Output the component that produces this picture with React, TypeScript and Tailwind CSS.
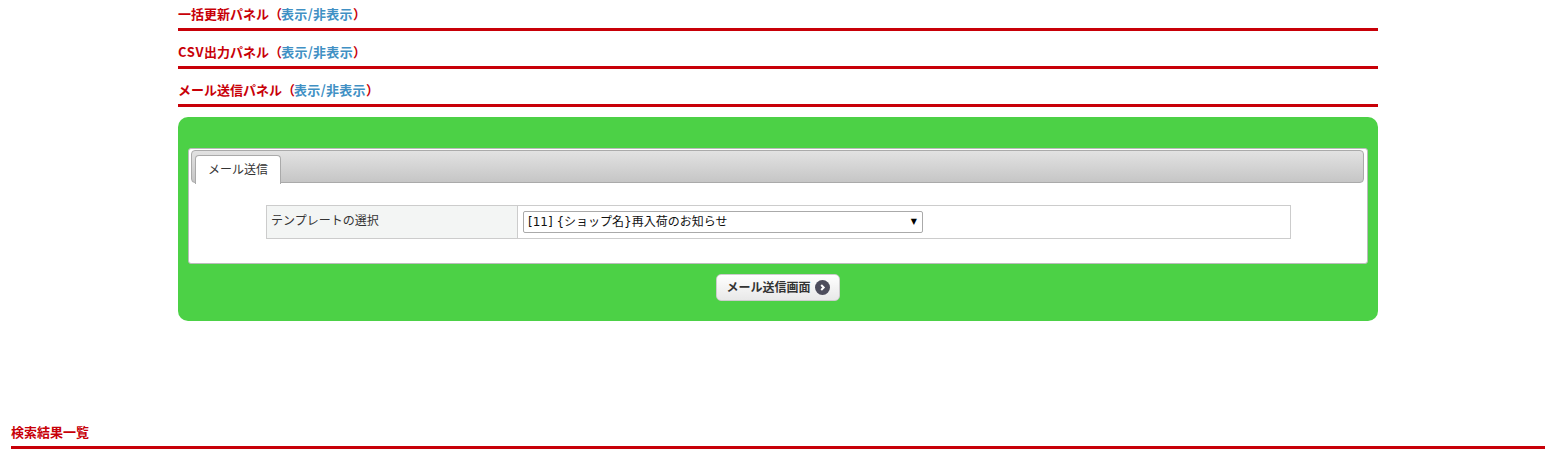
import React from "react";

const body = "font-['DejaVu_Sans','Noto_Sans_CJK_JP',sans-serif]";
const jp = "font-['Noto_Sans_CJK_JP','Noto_Sans',sans-serif]";

type HeadingProps = {
  title: React.ReactNode;
  toggle?: boolean;
  className?: string;
};

function Heading({ title, toggle, className }: HeadingProps) {
  return (
    <h2
      className={`border-b-[3px] border-[#c80008] pb-[4px] text-[13px] leading-[20px] font-bold text-[#c80008] ${jp} ${className}`}
    >
      {title}
      {toggle && (
        <span>
          （<a className="-ml-px tracking-[0.3px] text-[#4090c4]">表示/非表示</a>）
        </span>
      )}
    </h2>
  );
}

function MailPanel() {
  return (
    <div className="mt-[10px] h-[204px] rounded-[10px] bg-[#4cd146] px-[10px] pt-[31px]">
      <div className="h-[116px] rounded-[3px] border border-[#bbbbbb] bg-white p-px">
        <div className="ml-px mr-[2px] flex h-[33px] items-end rounded-[4px] border border-[#aaaaaa] bg-gradient-to-b from-[#e2e2e2] to-[#c6c6c6] pl-[3px]">
          <div className="relative -mb-[2px] flex h-[29px] w-[86px] items-center justify-center rounded-t-[4px] border border-b-0 border-[#aaaaaa] bg-white pb-px text-[12px] text-[#333333]">
            メール送信
          </div>
        </div>
        <div className="ml-[76px] mt-[22px] flex h-[34px] w-[1025px] border border-[#cccccc] text-[12px] text-[#333333]">
          <div className="flex w-[251px] items-center border-r border-[#cccccc] bg-[#f3f5f4] pb-[2px] pl-[4px]">
            テンプレートの選択
          </div>
          <div className="flex items-center pl-[5px]">
            <div className="relative">
              <select className="block h-[22px] w-[400px] appearance-none rounded-[2px] border border-[#aaaaaa] bg-white pl-[4px] text-[12px] text-[#111111] outline-none">
                <option>[11] {"{ショップ名}"}再入荷のお知らせ</option>
              </select>
              <span className="pointer-events-none absolute right-[6px] top-[3px] text-[8px] leading-[16px] text-black">
                ▼
              </span>
            </div>
          </div>
        </div>
      </div>
      <div className="mt-[10px] flex justify-center">
        <button className="flex h-[27px] w-[124px] items-center justify-center gap-[4px] rounded-[5px] border border-[#cccccc] bg-gradient-to-b from-white to-[#e8e8e8] text-[12px] font-bold text-[#333333]">
          メール送信画面
          <svg width="15" height="15" viewBox="0 0 15 15">
            <circle cx="7.5" cy="7.5" r="7.5" fill="#4d4d5c" />
            <path d="M6.2 5 L8.7 7.5 L6.2 10" fill="none" stroke="#ffffff" strokeWidth="2" />
          </svg>
        </button>
      </div>
    </div>
  );
}

export default function App() {
  return (
    <div className={`h-[463px] w-[1555px] overflow-hidden bg-white ${body}`}>
      <div className="ml-[178px] w-[1200px]">
        <Heading title="一括更新パネル" toggle className="pt-[4px]" />
        <Heading
          title={
            <>
              <span className="tracking-[0.6px]">CSV</span>出力パネル
            </>
          }
          toggle
          className="pt-[11px]"
        />
        <Heading title="メール送信パネル" toggle className="pt-[11px]" />
        <MailPanel />
      </div>
      <div className="ml-[11px] mt-[101px] w-[1534px]">
        <Heading title="検索結果一覧" />
      </div>
    </div>
  );
}
